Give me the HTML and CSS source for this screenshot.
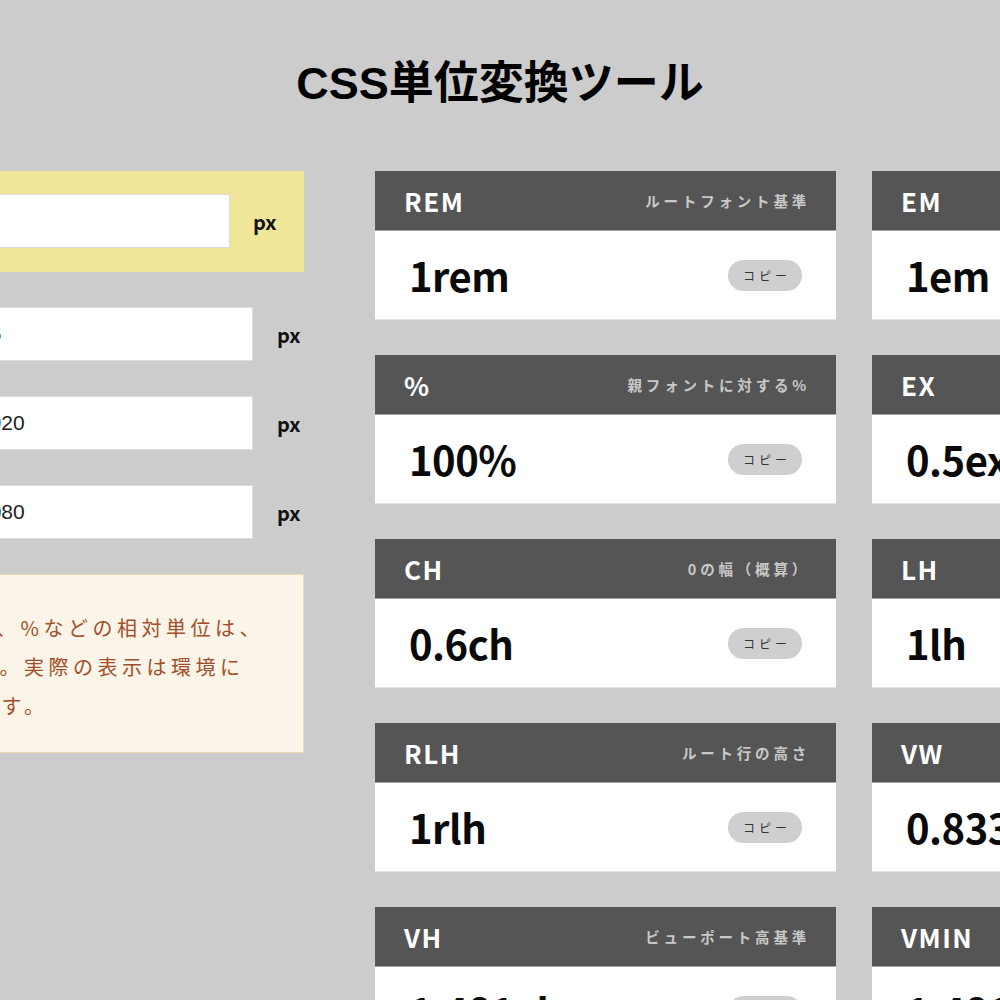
FILE: index.html
```html
<!DOCTYPE html>
<html lang="ja">
<head>
<meta charset="utf-8">
<title>CSS単位変換ツール</title>
<link rel="stylesheet" href="styles.css">
</head>
<body>
<header class="page-header">
  <h1 class="title">CSS単位変換ツール</h1>
</header>
<main class="layout">
  <section class="inputs">
    <div class="base-box">
      <label class="base-label">変換する値</label>
      <input class="field-input" type="text" value="16">
      <span class="unit">px</span>
    </div>
    <div class="field-row">
      <label class="field-label">ルートフォントサイズ</label>
      <input class="field-input" type="text" value="16">
      <span class="unit">px</span>
    </div>
    <div class="field-row">
      <label class="field-label">ビューポート幅</label>
      <input class="field-input" type="text" value="1920">
      <span class="unit">px</span>
    </div>
    <div class="field-row">
      <label class="field-label">ビューポート高さ</label>
      <input class="field-input" type="text" value="1080">
      <span class="unit">px</span>
    </div>
    <div class="note">※計算値は目安です。また、%などの相対単位は、<br>親要素によって変わります。実際の表示は環境に<br>よって異なる場合があります。</div>
  </section>
  <section class="cards">
    <article class="card">
      <div class="card-head"><span class="card-unit">REM</span><span class="card-desc">ルートフォント基準</span></div>
      <div class="card-body"><span class="card-value">1rem</span><button class="copy-btn">コピー</button></div>
    </article>
    <article class="card">
      <div class="card-head"><span class="card-unit">EM</span><span class="card-desc">親フォント基準</span></div>
      <div class="card-body"><span class="card-value">1em</span><button class="copy-btn">コピー</button></div>
    </article>
    <article class="card">
      <div class="card-head"><span class="card-unit">%</span><span class="card-desc">親フォントに対する%</span></div>
      <div class="card-body"><span class="card-value">100%</span><button class="copy-btn">コピー</button></div>
    </article>
    <article class="card">
      <div class="card-head"><span class="card-unit">EX</span><span class="card-desc">xの高さ（概算）</span></div>
      <div class="card-body"><span class="card-value">0.5ex</span><button class="copy-btn">コピー</button></div>
    </article>
    <article class="card">
      <div class="card-head"><span class="card-unit">CH</span><span class="card-desc">0の幅（概算）</span></div>
      <div class="card-body"><span class="card-value">0.6ch</span><button class="copy-btn">コピー</button></div>
    </article>
    <article class="card">
      <div class="card-head"><span class="card-unit">LH</span><span class="card-desc">行の高さ</span></div>
      <div class="card-body"><span class="card-value">1lh</span><button class="copy-btn">コピー</button></div>
    </article>
    <article class="card">
      <div class="card-head"><span class="card-unit">RLH</span><span class="card-desc">ルート行の高さ</span></div>
      <div class="card-body"><span class="card-value">1rlh</span><button class="copy-btn">コピー</button></div>
    </article>
    <article class="card">
      <div class="card-head"><span class="card-unit">VW</span><span class="card-desc">ビューポート幅基準</span></div>
      <div class="card-body"><span class="card-value">0.833vw</span><button class="copy-btn">コピー</button></div>
    </article>
    <article class="card">
      <div class="card-head"><span class="card-unit">VH</span><span class="card-desc">ビューポート高基準</span></div>
      <div class="card-body"><span class="card-value">1.481vh</span><button class="copy-btn">コピー</button></div>
    </article>
    <article class="card">
      <div class="card-head"><span class="card-unit">VMIN</span><span class="card-desc">短い辺基準</span></div>
      <div class="card-body"><span class="card-value">1.481vmin</span><button class="copy-btn">コピー</button></div>
    </article>
  </section>
</main>
</body>
</html>
```

FILE: styles.css
```css
html, body {
  margin: 0;
  padding: 0;
  overflow: hidden;
}

body {
  background: #cccccc;
  font-family: "Noto Sans CJK JP", "Noto Sans", sans-serif;
  color: #111;
}

.page-header {
  padding: 51px 0 54px;
  text-align: center;
}

.title {
  margin: 0;
  font-family: "Liberation Sans", "Noto Sans CJK JP", sans-serif;
  font-size: 45px;
  font-weight: 700;
  line-height: 66px;
  color: #000;
}

.layout {
  display: flex;
  justify-content: center;
  gap: 71px;
}

.inputs {
  flex: 0 0 637px;
  width: 637px;
  display: flex;
  flex-direction: column;
  gap: 35px;
}

.base-box {
  background: #efe69a;
  padding: 23px 25px 24px;
  display: flex;
  align-items: center;
  gap: 23px;
}

.base-label,
.field-label {
  font-size: 18px;
  font-weight: 700;
  color: #333;
}

.base-label {
  width: 150px;
}

.base-box .field-input {
  flex: 1;
}

.field-row {
  display: grid;
  grid-template-columns: 1fr 289px 27px;
  gap: 24px;
  align-items: center;
}

.field-input {
  box-sizing: border-box;
  height: 54px;
  min-width: 0;
  border: 1px solid #dcdcdc;
  background: #fff;
  padding: 0 13px;
  font-family: "Liberation Sans", Arial, sans-serif;
  font-size: 21px;
  color: #222;
  outline: none;
}

.unit {
  font-size: 20px;
  font-weight: 700;
  color: #111;
  width: 26px;
}

.note {
  background: #faf5e8;
  border: 1px solid #f1d6b6;
  padding: 33px 20px 27px 41px;
  text-indent: -5px;
  font-size: 20px;
  letter-spacing: 4.5px;
  line-height: 39px;
  color: #a24e2a;
  white-space: nowrap;
}

.cards {
  flex: 0 0 958px;
  width: 958px;
  display: grid;
  grid-template-columns: repeat(2, 461px);
  column-gap: 36px;
  row-gap: 35px;
  align-content: start;
}

.card {
  background: #fff;
  border-bottom: 1px solid #e4e4e4;
}

.card-head {
  box-sizing: border-box;
  height: 60px;
  background: #555555;
  border-bottom: 1px solid #a5a5a5;
  display: flex;
  align-items: center;
  justify-content: space-between;
  padding: 0 26px 0 29px;
}

.card-unit {
  font-size: 26px;
  font-weight: 700;
  letter-spacing: 1.5px;
  color: #fff;
}

.card-desc {
  font-size: 14.5px;
  font-weight: 700;
  letter-spacing: 3.8px;
  color: #c8c8c8;
}

.card-body {
  height: 88px;
  display: flex;
  align-items: center;
  justify-content: space-between;
  padding: 0 34px;
}

.card-value {
  font-size: 40px;
  font-weight: 700;
  letter-spacing: -0.5px;
  color: #0a0a0a;
  white-space: nowrap;
}

.copy-btn {
  flex: 0 0 auto;
  width: 74px;
  height: 31px;
  border: none;
  border-radius: 16px;
  background: #cfcfcf;
  font-family: "Noto Sans CJK JP", sans-serif;
  font-size: 12px;
  letter-spacing: 4px;
  padding: 0 0 0 4px;
  color: #333;
}
```
